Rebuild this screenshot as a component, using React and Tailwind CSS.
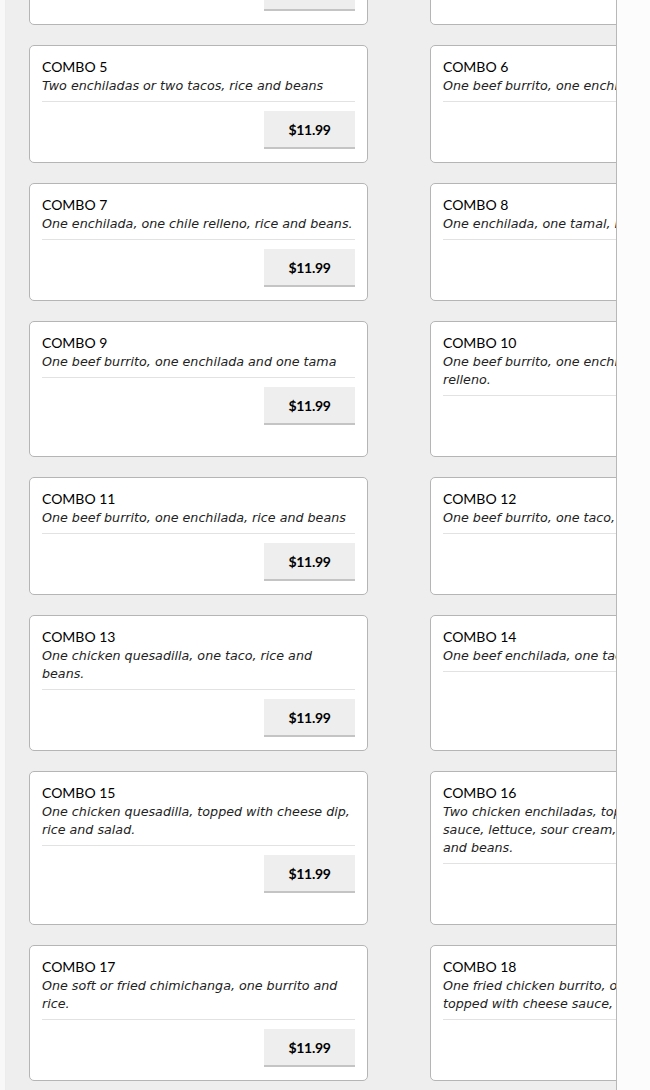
// Each description is split into the lines it shows on the menu board
const combos = [
  { name: 'COMBO 3', desc: ['One beef burrito, one taco, rice and beans'] },
  { name: 'COMBO 4', desc: ['Two beef burritos, rice and beans'] },
  { name: 'COMBO 5', desc: ['Two enchiladas or two tacos, rice and beans'] },
  { name: 'COMBO 6', desc: ['One beef burrito, one enchilada, rice and beans'] },
  { name: 'COMBO 7', desc: ['One enchilada, one chile relleno, rice and beans.'] },
  { name: 'COMBO 8', desc: ['One enchilada, one tamal, rice and beans'] },
  { name: 'COMBO 9', desc: ['One beef burrito, one enchilada and one tama'] },
  { name: 'COMBO 10', desc: ['One beef burrito, one enchilada and one chile', 'relleno.'] },
  { name: 'COMBO 11', desc: ['One beef burrito, one enchilada, rice and beans'] },
  { name: 'COMBO 12', desc: ['One beef burrito, one taco, rice and beans'] },
  { name: 'COMBO 13', desc: ['One chicken quesadilla, one taco, rice and', 'beans.'] },
  { name: 'COMBO 14', desc: ['One beef enchilada, one taco, rice and beans'] },
  { name: 'COMBO 15', desc: ['One chicken quesadilla, topped with cheese dip,', 'rice and salad.'] },
  {
    name: 'COMBO 16',
    desc: ['Two chicken enchiladas, topped with cheese', 'sauce, lettuce, sour cream, rice', 'and beans.'],
  },
  { name: 'COMBO 17', desc: ['One soft or fried chimichanga, one burrito and', 'rice.'] },
  { name: 'COMBO 18', desc: ['One fried chicken burrito, one chimichanga', 'topped with cheese sauce, rice.'] },
];

const ComboCard = ({ combo }) => (
  <div className="bg-white border border-[#b5b5b5] rounded-[5px] px-3 pt-3 pb-[13px]">
    <div className="text-[14px] leading-[18px] pb-px text-black">{combo.name}</div>
    <div
      className="text-[12.7px] leading-[18px] italic text-[#222] whitespace-nowrap"
      style={{ fontFamily: '"DejaVu Sans", sans-serif' }}
    >
      {combo.desc.map((line, i) => (
        <div key={i}>{line}</div>
      ))}
    </div>
    <div className="mt-[6px] border-t border-[#e2e2e2]" />
    <div className="flex justify-end mt-[9px]">
      <button className="w-[91px] h-[38px] bg-[#eeeeee] border-b-2 border-[#c4c4c4] text-[14px] font-bold text-black tracking-[-0.3px]">
        $11.99
      </button>
    </div>
  </div>
);

export default function App() {
  return (
    <div
      className="flex w-[650px] h-[1090px] overflow-hidden bg-white"
      style={{ fontFamily: 'Lato, "Noto Sans", sans-serif' }}
    >
      <div className="w-[6px] shrink-0 bg-[#f8f8f8] border-r border-[#ececec]" />
      <div className="w-[611px] shrink-0 bg-[#eeeeee] border-r border-[#b8b8b8] overflow-hidden">
        <div className="grid grid-cols-[339px_339px] gap-x-[62px] gap-y-[20px] pl-[23px] mt-[-93px]">
          {combos.map((c) => (
            <ComboCard key={c.name} combo={c} />
          ))}
        </div>
      </div>
      <div className="flex-1 bg-[#fcfcfc]" />
    </div>
  );
}
